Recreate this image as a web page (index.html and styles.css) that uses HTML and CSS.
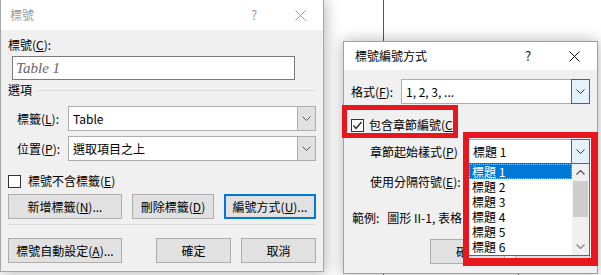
FILE: index.html
```html
<!DOCTYPE html>
<html lang="zh-Hant">
<head>
  <meta charset="UTF-8">
  <title>標號</title>
  <link rel="stylesheet" href="styles.css">
</head>
<body>
  <!-- 文件裡的表格線（在對話方塊後面） -->
  <div class="doc-line line-a"></div>
  <div class="doc-line line-b"></div>

  <!-- 標號對話方塊 -->
  <div class="win caption-win">
    <div class="titlebar">
      <span class="title">標號</span>
      <span class="tb-btn">?</span>
      <span class="tb-btn">
        <svg width="11" height="11" viewBox="0 0 11 11"><path d="M0.5 0.5 L10.5 10.5 M10.5 0.5 L0.5 10.5" stroke="currentColor" fill="none"/></svg>
      </span>
    </div>
    <div class="win-body">
      <div class="lbl-top">標號(<u>C</u>):</div>
      <div class="textbox">Table 1</div>

      <div class="group">選項</div>

      <div class="field">
        <span class="field-lbl">標籤(<u>L</u>):</span>
        <div class="combo">
          <span class="combo-text">Table</span>
          <span class="combo-btn"><svg width="9" height="5" viewBox="0 0 9 5"><polyline points="0.5,0.5 4.5,4.5 8.5,0.5" fill="none" stroke="#555"/></svg></span>
        </div>
      </div>
      <div class="field">
        <span class="field-lbl">位置(<u>P</u>):</span>
        <div class="combo">
          <span class="combo-text">選取項目之上</span>
          <span class="combo-btn"><svg width="9" height="5" viewBox="0 0 9 5"><polyline points="0.5,0.5 4.5,4.5 8.5,0.5" fill="none" stroke="#555"/></svg></span>
        </div>
      </div>

      <div class="check-row">
        <span class="checkbox"></span>
        <span>標號不含標籤(<u>E</u>)</span>
      </div>

      <div class="btn-row">
        <div class="btn w114">新增標籤(<u>N</u>)...</div>
        <div class="btn w82">刪除標籤(<u>D</u>)</div>
        <div class="btn w92 default">編號方式(<u>U</u>)...</div>
      </div>
      <div class="sep"></div>
      <div class="btn-row bottom">
        <div class="btn w114">標號自動設定(<u>A</u>)...</div>
        <div class="btn w75 push">確定</div>
        <div class="btn w75">取消</div>
      </div>
    </div>
  </div>

  <!-- 標號編號方式對話方塊 -->
  <div class="win numbering-win">
    <div class="titlebar">
      <span class="title">標號編號方式</span>
      <span class="tb-btn">?</span>
      <span class="tb-btn">
        <svg width="11" height="11" viewBox="0 0 11 11"><path d="M0.5 0.5 L10.5 10.5 M10.5 0.5 L0.5 10.5" stroke="currentColor" fill="none"/></svg>
      </span>
    </div>
    <div class="win-body">
      <div class="field first">
        <span class="field-lbl fmt">格式(<u>F</u>):</span>
        <div class="combo">
          <span class="combo-text">1, 2, 3, ...</span>
          <span class="combo-btn hot"><svg width="9" height="5" viewBox="0 0 9 5"><polyline points="0.5,0.5 4.5,4.5 8.5,0.5" fill="none" stroke="#333"/></svg></span>
        </div>
      </div>

      <div class="check-row tight">
        <span class="checkbox checked">
          <svg width="11" height="11" viewBox="0 0 11 11"><polyline points="1.5,5.5 4,8.5 9.5,2" fill="none" stroke="#222" stroke-width="1.3"/></svg>
        </span>
        <span class="clip-lbl">包含章節編號(<u>C</u>)</span>
      </div>

      <div class="field mid">
        <span class="field-lbl wide">章節起始樣式(<u>P</u>)</span>
        <div class="combo">
          <span class="combo-text">標題 1</span>
          <span class="combo-btn hot"><svg width="9" height="5" viewBox="0 0 9 5"><polyline points="0.5,0.5 4.5,4.5 8.5,0.5" fill="none" stroke="#333"/></svg></span>
        </div>
      </div>
      <div class="field">
        <span class="field-lbl wide">使用分隔符號(<u>E</u>):</span>
        <div class="combo"></div>
      </div>

      <div class="sample">範例:<span class="sample-val">圖形 II-1, 表格</span></div>

      <div class="btn-row end">
        <div class="btn w75 ok-btn">確</div>
        <div class="btn w75"></div>
      </div>
    </div>
  </div>

  <!-- 展開的下拉清單 -->
  <div class="droplist">
    <div class="items">
      <div class="item selected">標題 1</div>
      <div class="item">標題 2</div>
      <div class="item">標題 3</div>
      <div class="item">標題 4</div>
      <div class="item">標題 5</div>
      <div class="item">標題 6</div>
    </div>
    <div class="scrollbar">
      <span class="sb-arrow"><svg width="9" height="5" viewBox="0 0 9 5"><polyline points="0.5,4.5 4.5,0.5 8.5,4.5" fill="none" stroke="#555" stroke-width="1.3"/></svg></span>
      <span class="sb-thumb"></span>
      <span class="sb-space"></span>
      <span class="sb-arrow"><svg width="9" height="5" viewBox="0 0 9 5"><polyline points="0.5,0.5 4.5,4.5 8.5,0.5" fill="none" stroke="#888" stroke-width="1.3"/></svg></span>
    </div>
  </div>

  <!-- 紅色標示框 -->
  <div class="mark mark-check"></div>
  <div class="mark mark-list"></div>
</body>
</html>
```

FILE: styles.css
```css
body {
  margin: 0;
  width: 601px;
  height: 275px;
  position: relative;
  overflow: hidden;
  background: #fff;
  font-family: "Noto Sans CJK TC", "Noto Sans", sans-serif;
  font-size: 12px;
  line-height: 16px;
  color: #000;
}
u {
  text-decoration: underline;
  text-underline-offset: 1px;
}
/* Líneas de la tabla del documento */
.doc-line {
  position: absolute;
  width: 1px;
  background: #555;
}
.line-a {
  left: 383px;
  top: 0;
  height: 275px;
}
.line-b {
  left: 518px;
  top: 255px;
  height: 20px;
}

/* Ventanas */
.win {
  position: absolute;
  box-sizing: border-box;
  display: flex;
  flex-direction: column;
  background: #f0f0f0;
}
.caption-win {
  left: 0;
  top: -1px;
  width: 324px;
  height: 273px;
  border: 1px solid #a6a6a6;
  box-shadow: 2px 2px 14px rgba(0,0,0,0.28);
}
.numbering-win {
  left: 343px;
  top: 41px;
  width: 255px;
  height: 233px;
  border: 1px solid #f28a3a;
  box-shadow: 0 0 14px rgba(0,0,0,0.3);
}
.titlebar {
  height: 30px;
  flex-shrink: 0;
  background: #fff;
  display: flex;
  align-items: center;
}
.numbering-win .titlebar {
  height: 28px;
}
.title {
  flex: 1;
  padding-left: 9px;
  color: #9a9a9a;
}
.numbering-win .title {
  padding-left: 11px;
  color: #000;
}
.tb-btn {
  width: 46px;
  display: flex;
  justify-content: center;
  font-size: 13px;
  color: #9a9a9a;
}
.numbering-win .tb-btn {
  color: #111;
}
.win-body {
  flex: 1;
  padding: 7px 7px 0 7px;
}
.numbering-win .win-body {
  padding-top: 9px;
}

/* Controles */
.textbox {
  margin: 3px 0 0 4px;
  width: 283px;
  height: 24px;
  box-sizing: border-box;
  border: 1px solid #7a7a7a;
  background: #fff;
  padding-left: 3px;
  font: italic 15px/22px "Liberation Serif", serif;
  color: #666;
}
.group {
  display: flex;
  align-items: center;
  gap: 5px;
  margin-top: 2px;
}
.group::after {
  content: "";
  flex: 1;
  height: 1px;
  background: #dcdcdc;
}
.field {
  display: flex;
  align-items: center;
  height: 25px;
  margin-top: 5px;
}
.group + .field {
  margin-top: 8px;
}
.field.first {
  margin-top: 0;
}
.field.mid {
  margin-top: 6px;
}
.field-lbl {
  width: 60px;
  flex-shrink: 0;
  box-sizing: border-box;
  padding-left: 9px;
}
.field-lbl.fmt {
  width: 50px;
  padding-left: 0;
}
.field-lbl.wide {
  width: 117px;
  padding-left: 19px;
}
.combo {
  flex: 1;
  height: 25px;
  box-sizing: border-box;
  border: 1px solid #adadad;
  background: #fff;
  display: flex;
}
.combo-text {
  flex: 1;
  padding-left: 4px;
  line-height: 23px;
  white-space: nowrap;
}
.combo-btn {
  width: 17px;
  border-left: 1px solid #adadad;
  background: #e1e1e1;
  display: flex;
  align-items: center;
  justify-content: center;
}
.combo-btn.hot {
  margin: -1px -1px -1px 0;
  border: 1px solid #0078d7;
  background: #e5f1fb;
}
.check-row {
  display: flex;
  align-items: center;
  gap: 7px;
  margin-top: 12px;
}
.check-row.tight {
  gap: 5px;
  margin-top: 13px;
}
.clip-lbl {
  width: 88px;
  overflow: hidden;
  white-space: nowrap;
}
.checkbox {
  width: 13px;
  height: 13px;
  box-sizing: border-box;
  border: 1px solid #333;
  background: #fff;
  display: flex;
  align-items: center;
  justify-content: center;
}
.btn-row {
  display: flex;
  gap: 10px;
  margin-top: 5px;
}
.btn-row.bottom {
  margin-top: 13px;
}
.btn-row.end {
  justify-content: flex-end;
  margin-top: 13px;
}
.btn {
  height: 25px;
  box-sizing: border-box;
  border: 1px solid #adadad;
  background: #e1e1e1;
  display: flex;
  align-items: center;
  justify-content: center;
  white-space: nowrap;
}
.btn.default {
  border: 2px solid #0078d7;
}
.btn.push {
  margin-left: auto;
}
/* sólo se ve la mitad izquierda del botón 確定 */
.btn.ok-btn {
  justify-content: flex-start;
  padding-left: 25px;
}
.w114 { width: 114px; }
.w92 { width: 92px; }
.w82 { width: 82px; }
.w75 { width: 75px; }
.sep {
  height: 1px;
  margin-top: 5px;
  background: #dcdcdc;
}
.sample {
  margin-top: 16px;
  padding-left: 1px;
  white-space: nowrap;
  overflow: hidden;
}
.sample-val {
  margin-left: 8px;
}

/* Lista desplegable abierta */
.droplist {
  position: absolute;
  left: 468px;
  top: 163px;
  width: 122px;
  height: 93px;
  box-sizing: border-box;
  border: 1px solid #646464;
  background: #fff;
  display: flex;
}
.items {
  flex: 1;
}
.item {
  height: 15px;
  line-height: 15px;
  padding-left: 3px;
}
.item.selected {
  background: #0078d7;
  color: #fff;
  outline: 1px dotted #ffb347;
  outline-offset: -1px;
}
.scrollbar {
  width: 17px;
  background: #f0f0f0;
  display: flex;
  flex-direction: column;
  align-items: center;
}
.sb-arrow {
  height: 17px;
  display: flex;
  align-items: center;
}
.sb-thumb {
  width: 15px;
  height: 36px;
  background: #cdcdcd;
}
.sb-space {
  flex: 1;
}

/* Marcos rojos */
.mark {
  position: absolute;
  box-sizing: border-box;
  border: 5px solid #e8171f;
}
.mark-check {
  left: 342px;
  top: 105px;
  width: 116px;
  height: 33px;
}
.mark-list {
  left: 463px;
  top: 132px;
  width: 135px;
  height: 134px;
  border-width: 6px 7px 8px 6px;
}
```
